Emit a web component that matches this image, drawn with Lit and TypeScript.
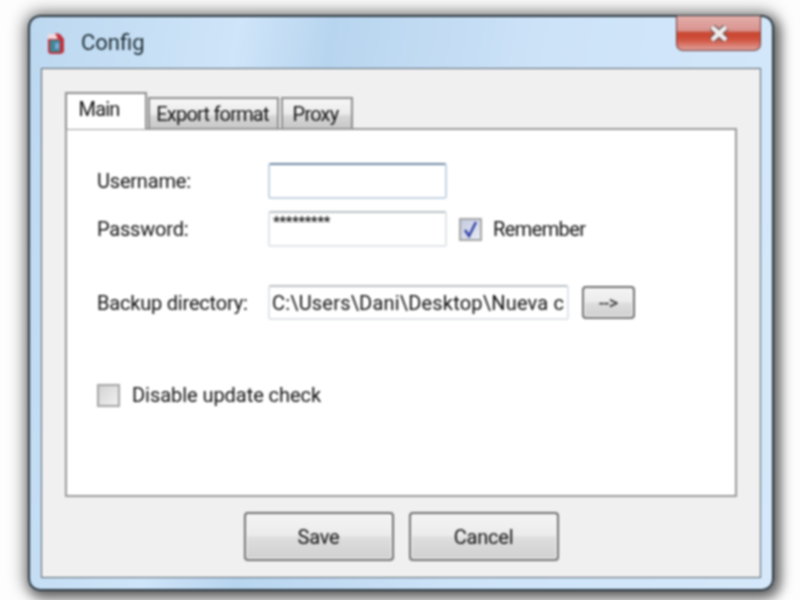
import { LitElement, html, css } from 'lit';
import { customElement } from 'lit/decorators.js';

@customElement('app-root')
export class AppRoot extends LitElement {
  static override styles = css`
    :host {
      display: block;
      width: 800px;
      height: 600px;
      box-sizing: border-box;
      padding: 15px 26px 9px 28px;
      background: #fdfdfd;
      font-family: Roboto, "Noto Sans", sans-serif;
      font-size: 20px;
      letter-spacing: -0.2px;
      color: #111;
      overflow: hidden;
    }

    .window {
      position: relative;
      box-sizing: border-box;
      height: 100%;
      display: flex;
      flex-direction: column;
      border: 2px solid #2c3840;
      border-radius: 12px;
      background: linear-gradient(100deg, #bcd8f0 0%, #cfe5f9 25%, #b8d5ef 36%, #cde3f8 62%, #d6e9fb 100%);
      box-shadow: 0 0 16px 4px rgba(0, 0, 0, 0.42), 4px 5px 12px 2px rgba(0, 0, 0, 0.45);
      filter: blur(0.8px);
    }

    /* title bar */
    .titlebar {
      height: 51px;
      flex: none;
      display: flex;
      align-items: center;
      gap: 14px;
      padding-left: 15px;
      box-sizing: border-box;
      font-size: 22px;
      letter-spacing: 0;
      color: #1c2a32;
    }
    .titlebar svg { display: block; }

    .close {
      position: absolute;
      top: -1px;
      right: 11px;
      width: 85px;
      height: 35px;
      box-sizing: border-box;
      display: flex;
      align-items: center;
      justify-content: center;
      border: 1px solid #6e3a38;
      border-top: none;
      border-radius: 0 0 7px 7px;
      background: linear-gradient(#e4aeaa 0%, #d99490 42%, #c8452f 50%, #d0503c 68%, #e0a09a 100%);
    }

    /* client area */
    .client {
      flex: 1;
      margin: 0 11px 11px 11px;
      display: flex;
      flex-direction: column;
      box-sizing: border-box;
      padding: 24px 23px 0 23px;
      background: #f0f0f0;
      border: 1px solid #55616b;
    }

    .tabs {
      display: flex;
      align-items: flex-end;
      height: 36px;
      flex: none;
      position: relative;
      z-index: 1;
      margin-bottom: -1px;
      letter-spacing: -0.8px;
    }
    .tab {
      height: 32px;
      box-sizing: border-box;
      display: flex;
      align-items: center;
      justify-content: center;
      margin-left: 1px;
      border: 2px solid #8e8e8e;
      border-bottom: 1px solid #969696;
      background: linear-gradient(#f6f6f6 0%, #ececec 50%, #d6d6d6 60%, #c8c8c8 100%);
    }
    .tab-main {
      height: 37px;
      width: 82px;
      margin-left: 0;
      padding: 0 14px 5px 0;
      background: #fff;
      border-bottom: none;
    }
    .tab-export { width: 131px; padding-right: 2px; }
    .tab-proxy { width: 72px; margin-left: 2px; padding-right: 3px; }

    .panel {
      height: 369px;
      flex: none;
      box-sizing: border-box;
      padding: 33px 0 0 30px;
      background: #fff;
      border: 2px solid #9a9a9a;
      display: flex;
      flex-direction: column;
    }

    .row {
      display: flex;
      align-items: center;
    }
    .row-user { height: 36px; }
    .row-pass { height: 36px; margin-top: 12px; }
    .row-dir { height: 35px; margin-top: 38px; }
    .row-check { height: 24px; margin-top: 63px; letter-spacing: -0.05px; }

    .label { width: 171px; flex: none; }

    .input {
      box-sizing: border-box;
      height: 100%;
      width: 179px;
      display: flex;
      align-items: center;
      padding-left: 2px;
      background: #fff;
      border: 2px solid #e0e4e8;
      border-top-color: #bcc1c6;
      border-radius: 3px;
      white-space: nowrap;
      overflow: hidden;
    }
    .input-focus {
      border-color: #c4d4e2;
      border-top-color: #6f8ba4;
    }
    .input-pass {
      align-items: flex-start;
      font-size: 15px;
      line-height: 18px;
      padding-left: 3px;
      font-weight: 700;
      letter-spacing: -0.5px;
      color: #111;
    }
    .input-dir { width: 301px; letter-spacing: 0.2px; }

    .check {
      box-sizing: border-box;
      width: 23px;
      height: 23px;
      flex: none;
      display: flex;
      align-items: center;
      justify-content: center;
      border: 2px solid #a4a4a4;
      background: linear-gradient(135deg, #d4d4d4, #f0f0f0);
    }
    .check-on {
      margin-left: 12px;
      margin-right: 11px;
      background: linear-gradient(135deg, #c4cbe0, #e8ebf4);
    }
    .check-off { margin-right: 12px; }

    .remember { letter-spacing: -0.6px; }

    .btn {
      box-sizing: border-box;
      display: flex;
      align-items: center;
      justify-content: center;
      border: 2px solid #6f6f6f;
      border-radius: 4px;
      background: linear-gradient(#f4f4f4 0%, #ececec 47%, #dedede 52%, #d0d0d0 100%);
      box-shadow: inset 0 0 0 1px #fafafa;
    }
    .btn-arrow {
      width: 53px;
      height: 33px;
      margin-left: 13px;
      font-size: 18px;
    }

    .footer {
      flex: 1;
      display: flex;
      justify-content: center;
      align-items: flex-start;
      gap: 15px;
      padding: 15px 0 0 0;
    }
    .footer .btn { width: 150px; height: 49px; }
  `;

  override render() {
    return html`
      <div class="window">
        <div class="titlebar">
          <svg width="22" height="24" viewBox="0 0 22 24">
            <path d="M3 3h8l6 4v3H3z" fill="#f3d9dc" />
            <path d="M10 2l5 1 4 5v13l-3 2H5l-2-2V8h10z" fill="#c2323c" />
            <rect x="5" y="9" width="10" height="12" rx="1" fill="#3f8795" />
            <rect x="10" y="12" width="4" height="6" fill="#7fa8d8" />
          </svg>
          <span>Config</span>
        </div>
        <div class="close">
          <svg width="20" height="17" viewBox="0 0 20 17">
            <path d="M3 2l14 13M17 2L3 15" stroke="#5c4a4a" stroke-width="7" />
            <path d="M3 2l14 13M17 2L3 15" stroke="#f0ecec" stroke-width="4.5" />
          </svg>
        </div>
        <div class="client">
          <div class="tabs">
            <div class="tab tab-main">Main</div>
            <div class="tab tab-export">Export format</div>
            <div class="tab tab-proxy">Proxy</div>
          </div>
          <div class="panel">
            <div class="row row-user">
              <span class="label">Username:</span>
              <div class="input input-focus"></div>
            </div>
            <div class="row row-pass">
              <span class="label">Password:</span>
              <div class="input input-pass">*********</div>
              <div class="check check-on">
                <svg width="15" height="17" viewBox="0 0 15 17">
                  <path d="M2 9l4 6 7-14" fill="none" stroke="#3a48a8" stroke-width="2.6" />
                </svg>
              </div>
              <span class="remember">Remember</span>
            </div>
            <div class="row row-dir">
              <span class="label">Backup directory:</span>
              <div class="input input-dir">C:\\Users\\Dani\\Desktop\\Nueva c</div>
              <div class="btn btn-arrow">--&gt;</div>
            </div>
            <div class="row row-check">
              <div class="check check-off"></div>
              <span>Disable update check</span>
            </div>
          </div>
          <div class="footer">
            <div class="btn">Save</div>
            <div class="btn">Cancel</div>
          </div>
        </div>
      </div>
    `;
  }
}

declare global {
  interface HTMLElementTagNameMap {
    'app-root': AppRoot;
  }
}
